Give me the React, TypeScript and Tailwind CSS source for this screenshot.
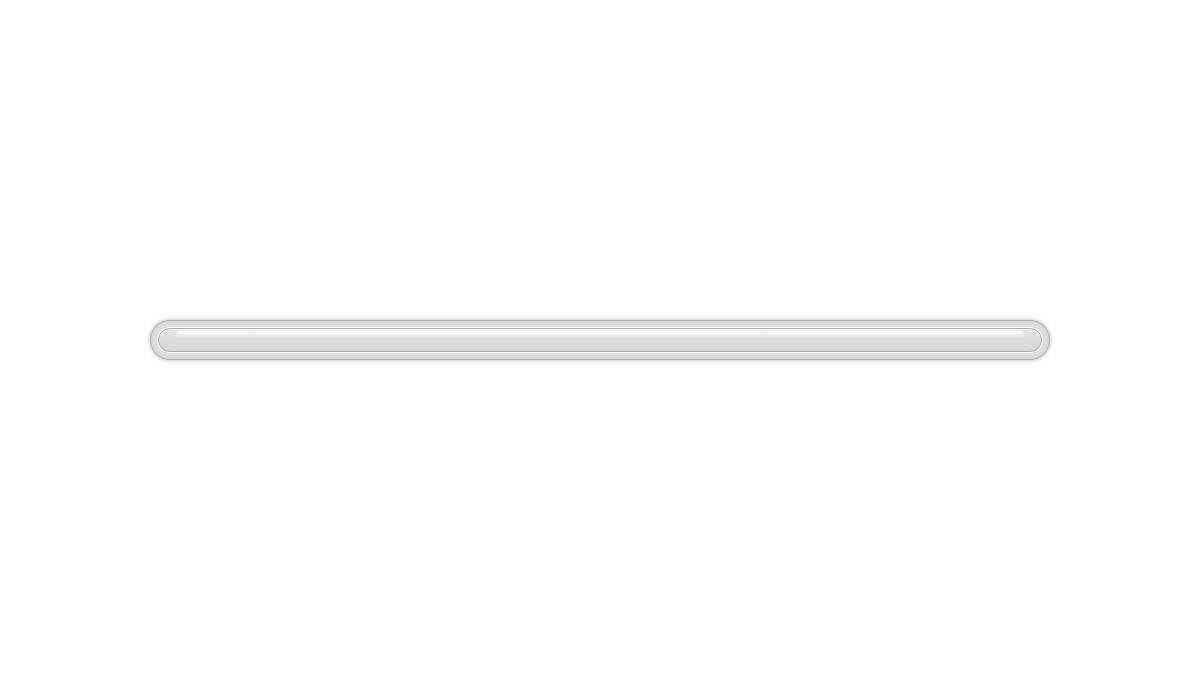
export default function App() {
  return (
    <div className="flex h-[680px] w-full items-center justify-center bg-white">
      <div className="h-10 w-[900px] rounded-full border border-[#adadad] bg-[#dcdcdc] p-[7px] shadow-[0_0_4px_rgba(0,0,0,0.3)]">
        <div className="h-full w-full rounded-full border border-[#a9a9a9] bg-gradient-to-b from-[#e4e4e4] to-[#d8d8d8] px-[17px] pt-[2px] shadow-[0_0_0_1px_#ffffff,inset_0_1px_0_#ffffff]">
          <div className="h-[7px] w-full rounded-full bg-gradient-to-b from-white/90 to-white/10" />
        </div>
      </div>
    </div>
  );
}
